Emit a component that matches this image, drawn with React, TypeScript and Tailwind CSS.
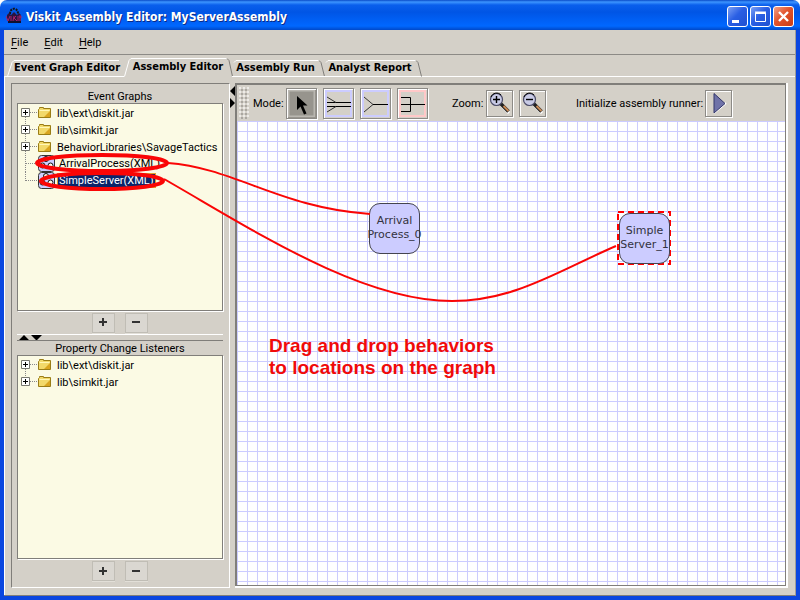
import React from "react";

const etched =
  "border border-[#8c8a86] shadow-[1px_1px_0_#fff,inset_1px_1px_0_#fff] flex items-center justify-center shrink-0";

function AppIcon() {
  return (
    <svg width="16" height="16" viewBox="0 0 16 16" className="shrink-0">
      <path d="M4 7C4 0 12 0 12 7" fill="none" stroke="#151515" strokeWidth="2" strokeDasharray="2 1" />
      <path d="M1 8l2-2 2 2 3-3 3 3 2-2 2 2v6H1z" fill="#2a1440" />
      <path d="M0 9l2 5 2-5M5 9v5M8 9l-1 5M7 12l3-3M8 11l3 3M12 9v5M14 8v6M13 10h3" fill="none" stroke="#a8206c" strokeWidth="1" />
      <path d="M2 15h13" stroke="#101030" strokeWidth="2" />
    </svg>
  );
}

function TitleBar() {
  const base =
    "w-[21px] h-[21px] rounded-[3px] border border-white flex items-center justify-center";
  return (
    <header className="flex h-[30px] shrink-0 items-center gap-1 rounded-t-[7px] bg-[linear-gradient(to_bottom,#0a4bc8_0px,#3d95ff_2px,#0a5fec_5px,#0055e5_12px,#0062f8_22px,#0068ff_26px,#0048c8_30px)] pl-[6px] pr-[6px]">
      <AppIcon />
      <h1 className="grow whitespace-nowrap pt-[4px] font-['DejaVu_Sans_Condensed','DejaVu_Sans',sans-serif] text-[12px] font-bold leading-[18px] text-white [text-shadow:1px_1px_0_#0a2a86]">
        Viskit Assembly Editor: MyServerAssembly
      </h1>
      <div className="flex gap-[2px] pt-[3px]">
        <button aria-label="Minimize" className={base + " bg-[linear-gradient(135deg,#7ba0f4,#2a5fe4_45%,#1f50d0)]"}>
          <svg width="19" height="19"><path d="M4 13h7v3H4z" fill="#fff" /></svg>
        </button>
        <button aria-label="Maximize" className={base + " bg-[linear-gradient(135deg,#7ba0f4,#2a5fe4_45%,#1f50d0)]"}>
          <svg width="19" height="19"><path d="M4.500 5.500h10v9h-10zM4 5h11M4 6.500h11" fill="none" stroke="#fff" /></svg>
        </button>
        <button aria-label="Close" className={base + " bg-[linear-gradient(135deg,#f0a088,#e2532c_45%,#c83c14)]"}>
          <svg width="19" height="19"><path d="M5 5l9 9M14 5l-9 9" stroke="#fff" strokeWidth="2.400" /></svg>
        </button>
      </div>
    </header>
  );
}

function MenuBar() {
  const items = ["File", "Edit", "Help"];
  return (
    <nav className="flex h-[25px] shrink-0 items-center gap-[16px] border-b border-[#8c8a86] pl-[7px] pt-[2px]">
      {items.map((m) => (
        <button key={m} className="leading-[14px]">
          <span className="underline underline-offset-2">{m[0]}</span>
          {m.slice(1)}
        </button>
      ))}
    </nav>
  );
}

function Tab({ label, width, selected, overlap }: { label: string; width: number; selected?: boolean; overlap?: boolean }) {
  const top = selected ? 1.5 : 3.5;
  return (
    <button
      role="tab"
      aria-selected={!!selected}
      style={{ width }}
      className={
        "relative h-[20px] shrink-0 whitespace-nowrap text-center " +
        (selected ? "" : overlap ? "pr-[5px] pt-[2px]" : "pl-[3px] pt-[2px]")
      }
    >
      <svg className="absolute left-0 top-0 overflow-visible" width={width} height="20" fill="none">
        {!overlap && <path d={`M0.500 19.500L5 ${top + 2}L7 ${top}H${width - 5}`} stroke="#fff" />}
        {overlap && <path d={`M2 ${top + 2}L4 ${top}H${width - 5}`} stroke="#fff" />}
        <path d={`M${width - 5} ${top}l2 2L${width + 0.5} 19.500`} stroke={label === "Event Graph Editor" ? "none" : "#807e7a"} />
        {!selected && <path d={`M0 19.500H${width}`} stroke="#fff" />}
      </svg>
      <span className="relative">{label}</span>
    </button>
  );
}

function Tabs() {
  return (
    <div role="tablist" className="flex shrink-0 pt-[2px] font-['DejaVu_Sans_Condensed','DejaVu_Sans',sans-serif] text-[11px] font-bold leading-[14px]">
      <span className="w-[3px] border-b border-white" />
      <Tab label="Event Graph Editor" width={117} />
      <Tab label="Assembly Editor" width={108} selected />
      <Tab label="Assembly Run" width={92} overlap />
      <Tab label="Analyst Report" width={97} overlap />
      <span className="grow border-b border-white" />
    </div>
  );
}

function Expander({ first, last }: { first?: boolean; last?: boolean }) {
  return (
    <button aria-label="Expand" className="h-[17px] w-[19px] shrink-0">
      <svg width="19" height="17" fill="none">
        {!first && <path d="M7.500 0V4" stroke="#888" strokeDasharray="1 1" />}
        {!last && <path d="M7.500 13V17" stroke="#888" strokeDasharray="1 1" />}
        <path d="M12 8.500h7" stroke="#888" strokeDasharray="1 1" />
        <path d="M3.500 4.500h8v8h-8z" fill="#fff" stroke="#77776f" />
        <path d="M5 8.500h5M7.500 6v5" stroke="#000" />
      </svg>
    </button>
  );
}

function Folder() {
  return (
    <svg width="15" height="13" viewBox="0 0 15 13" className="shrink-0">
      <path d="M1.500 11.500v-8l1-1V1.500h4v1h7v9z" fill="#f2d96a" stroke="#9a7d16" />
      <path d="M2.500 4.500h10" stroke="#fff7b8" />
      <path d="M7 11L13 5v6z" fill="#d9a520" />
    </svg>
  );
}

function FolderRow({ label, first, last }: { label: string; first?: boolean; last?: boolean }) {
  return (
    <li className="flex h-[17px] items-center">
      <Expander first={first} last={last} />
      <Folder />
      <span className="whitespace-nowrap pl-[5px] pt-[2px] leading-[15px]">{label}</span>
    </li>
  );
}

function LeafRow({ label, last, selected }: { label: string; last?: boolean; selected?: boolean }) {
  return (
    <li className="flex h-[17px] items-center">
      <svg width="19" height="17" fill="none" className="shrink-0">
        <path d={last ? "M7.500 0V9" : "M7.500 0V17"} stroke="#888" strokeDasharray="1 1" />
        <path d="M8 8.500h11" stroke="#888" strokeDasharray="1 1" />
      </svg>
      <svg width="20" height="17" viewBox="0 0 20 17" className="shrink-0">
        <rect x="1.500" y="0.500" width="16" height="16" rx="3" fill="#ccccff" stroke="#333" />
        <g fill="#fff8e8" stroke="#111">
          <circle cx="9" cy="4" r="2.500" />
          <circle cx="5.500" cy="10.500" r="2.500" />
          <circle cx="13.500" cy="10.500" r="2.500" />
        </g>
      </svg>
      <span
        className={
          "whitespace-nowrap border px-px leading-[13px] " +
          (selected ? "border-[#e0a030] bg-[#0a246a] text-white" : "border-transparent")
        }
      >
        {label}
      </span>
    </li>
  );
}

function AddRemove() {
  const cls =
    "flex h-[20px] w-[23px] items-center justify-center border border-[#c0bdb5] bg-[#dad7d1] shadow-[0_1px_0_#e2dfd8]";
  return (
    <div className="flex shrink-0 justify-center gap-[10px] pb-px pt-[2px]">
      <button aria-label="Add" className={cls}>
        <svg width="9" height="9"><path d="M0 4h8M4 0v8" stroke="#333" strokeWidth="2" /></svg>
      </button>
      <button aria-label="Remove" className={cls}>
        <svg width="9" height="9"><path d="M0 4h8" stroke="#333" strokeWidth="2" /></svg>
      </button>
    </div>
  );
}

const treeBox =
  "overflow-hidden basis-0 border border-[#807e7a] bg-[#fbfae4] shadow-[1px_1px_0_#fff] ";

function Sidebar() {
  return (
    <aside className="flex w-[219px] shrink-0 flex-col border border-b-white border-l-[#807e7a] border-r-white border-t-[#807e7a] pb-[5px] pl-[5px] pr-[6px] pt-[5px]">
      <h2 className="h-[14px] shrink-0 text-center leading-[16px]">Event Graphs</h2>
      <ul className={treeBox + "grow-[208]"}>
        <FolderRow label="lib\ext\diskit.jar" first />
        <FolderRow label="lib\simkit.jar" />
        <FolderRow label="BehaviorLibraries\SavageTactics" />
        <LeafRow label="ArrivalProcess(XML)" />
        <LeafRow label="SimpleServer(XML)" last selected />
      </ul>
      <AddRemove />
      <div className="h-[7px] shrink-0 border-b border-t border-b-[#807e7a] border-t-white">
        <svg width="26" height="5"><path d="M2 5l5-5 5 5zM14 0h11l-5.500 5.500z" /></svg>
      </div>
      <h2 className="h-[14px] shrink-0 text-center leading-[16px]">Property Change Listeners</h2>
      <ul className={treeBox + "grow-[204]"}>
        <FolderRow label="lib\ext\diskit.jar" first />
        <FolderRow label="lib\simkit.jar" last />
      </ul>
      <AddRemove />
    </aside>
  );
}

function Magnifier({ plus }: { plus?: boolean }) {
  return (
    <svg width="22" height="22" fill="none">
      <path d="M12 13l8 8" stroke="#fff" strokeWidth="3" />
      <path d="M11.500 11.500l8 8" stroke="#222" strokeWidth="3.500" />
      <path d="M14.500 14l5 5" stroke="#c98a55" strokeWidth="2" />
      <circle cx="7.500" cy="7.500" r="6" fill="#c9cbe6" stroke="#4a4a66" strokeWidth="1.200" />
      <path d="M2 5A6 6 0 0 1 12 3" stroke="#000" />
      <path d={plus ? "M4 7.500h7M7.500 4v7" : "M4 7.500h7"} stroke="#000" strokeWidth="1.400" />
    </svg>
  );
}

function Toolbar() {
  const mode = "h-[31px] w-[31px] " + etched;
  const small = "h-[27px] w-[27px] " + etched;
  return (
    <div className="flex h-[36px] shrink-0 items-center pl-[2px] leading-[14px]">
      <span className="h-[32px] w-[10px] shrink-0 bg-[radial-gradient(circle_at_1px_1px,#fff_0.5px,transparent_1px),radial-gradient(circle_at_3px_3px,#8c8a86_0.5px,transparent_1px)] bg-[size:4px_4px]" />
      <span className="w-[37px] shrink-0 pl-[4px] pt-px">Mode:</span>
      <div className="flex gap-[6px]">
        <button aria-label="Select" className={mode + " bg-[#97948d]"}>
          <svg width="27" height="27">
            <path d="M0 0h27v27H0z" fill="none" stroke="#bab7b1" strokeWidth="3" />
            <path d="M9 6v14l3.500-3.500 3.500 8 2.500-1-3.500-8h4.500z" fill="#000" />
          </svg>
        </button>
        <button aria-label="Adapter" className={mode}>
          <svg width="27" height="27" fill="none">
            <path d="M0 0h27v27H0z" stroke="#ccccff" strokeWidth="4" />
            <path d="M2 12.500h24M2 16.500h24" stroke="#000" />
            <path d="M2 7l9 5.500M2 22l9-5.500" stroke="#333" />
          </svg>
        </button>
        <button aria-label="Connect listener" className={mode}>
          <svg width="27" height="27" fill="none">
            <path d="M0 0h27v27H0z" stroke="#ccccff" strokeWidth="4" />
            <path d="M11 14.500h15" stroke="#000" />
            <path d="M2 7l9 7.500L2 22" stroke="#333" />
          </svg>
        </button>
        <button aria-label="Connect property listener" className={mode}>
          <svg width="27" height="27" fill="none">
            <path d="M0 0h27v27H0z" stroke="#ffc8c8" strokeWidth="4" />
            <path d="M2 14.500h24M2 7.500h9.500v14H2" stroke="#000" />
          </svg>
        </button>
      </div>
      <span className="w-[58px] shrink-0 pl-[24px] pt-px">Zoom:</span>
      <div className="flex gap-[6px]">
        <button aria-label="Zoom in" className={small}><Magnifier plus /></button>
        <button aria-label="Zoom out" className={small}><Magnifier /></button>
      </div>
      <span className="w-[159px] shrink-0 whitespace-nowrap pl-[30px] pt-px">Initialize assembly runner:</span>
      <button aria-label="Initialize assembly runner" className={small}>
        <svg width="21" height="23">
          <path d="M6 21L18 11" stroke="#fff" strokeWidth="2" />
          <path d="M6 1.500l11 10-11 9.500z" fill="#6f72a8" stroke="#33366a" />
        </svg>
      </button>
    </div>
  );
}

const nodeCls =
  "flex h-[51px] w-[51px] flex-col items-center rounded-[11px] border border-[#44444f] bg-[#ccccff] pt-[10px] font-['DejaVu_Sans',sans-serif] text-[11px] leading-[14px] text-[#333340]";

function Canvas() {
  return (
    <div className="relative grow overflow-hidden bg-white bg-[linear-gradient(to_right,#ccccff_1px,transparent_1px),linear-gradient(to_bottom,#ccccff_1px,transparent_1px)] bg-[size:10px_10px]">
      <div className={"absolute left-[132px] top-[82px] " + nodeCls}>
        <span>Arrival</span>
        <span>Process_0</span>
      </div>
      <div className="absolute left-[380px] top-[90px]">
        <svg className="absolute left-0 top-0" width="54" height="54" fill="none">
          <path d="M1 1h52v52h-52z" stroke="#f00" strokeWidth="2" strokeDasharray="6 4" />
        </svg>
        <div className={"relative m-[2px] " + nodeCls}>
          <span>Simple</span>
          <span>Server_1</span>
        </div>
      </div>
      <p className="absolute left-[32px] top-[214px] whitespace-nowrap font-['Liberation_Sans',Arial,sans-serif] text-[19px] font-bold leading-[22px] text-[#f00a0a]">
        Drag and drop behaviors
        <br />
        to locations on the graph
      </p>
    </div>
  );
}

function Annotations() {
  return (
    <svg className="pointer-events-none absolute left-0 top-0" width="800" height="600" fill="none" stroke="#fa0505">
      <ellipse cx="102" cy="163" rx="65" ry="8" strokeWidth="4" />
      <ellipse cx="102" cy="181" rx="61" ry="8" strokeWidth="4" />
      <path d="M168 163C235 168 280 208 370 214" strokeWidth="2" />
      <path d="M164 179C250 228 360 301 452 301C515 301 560 270 616 246" strokeWidth="2" />
    </svg>
  );
}

export default function App() {
  return (
    <div className="relative flex h-screen flex-col bg-white font-['Roboto',sans-serif] text-[11px] text-black">
      <TitleBar />
      <div className="flex min-h-0 grow flex-col border-x-4 border-b-4 border-[#0a46e0]">
        <div className="flex min-h-0 grow flex-col border-b border-r border-b-[#807e7a] border-r-[#a09e98] bg-[#d4d0c8]">
          <MenuBar />
          <Tabs />
          <main className="flex min-h-0 grow border-l border-white pb-[7px] pl-[6px] pr-[7px] pt-[6px]">
            <Sidebar />
            <div className="w-[5px] shrink-0 pt-[3px]">
              <svg width="5" height="22"><path d="M5 0v10L0 5zM0 12v10l5-5z" /></svg>
            </div>
            <section className="flex min-w-0 grow flex-col border-b-2 border-r-2 border-white">
              <div className="flex min-h-0 grow flex-col border-b border-l-2 border-r border-t-2 border-[#807e7a]">
                <Toolbar />
                <Canvas />
              </div>
            </section>
          </main>
        </div>
      </div>
      <Annotations />
    </div>
  );
}
